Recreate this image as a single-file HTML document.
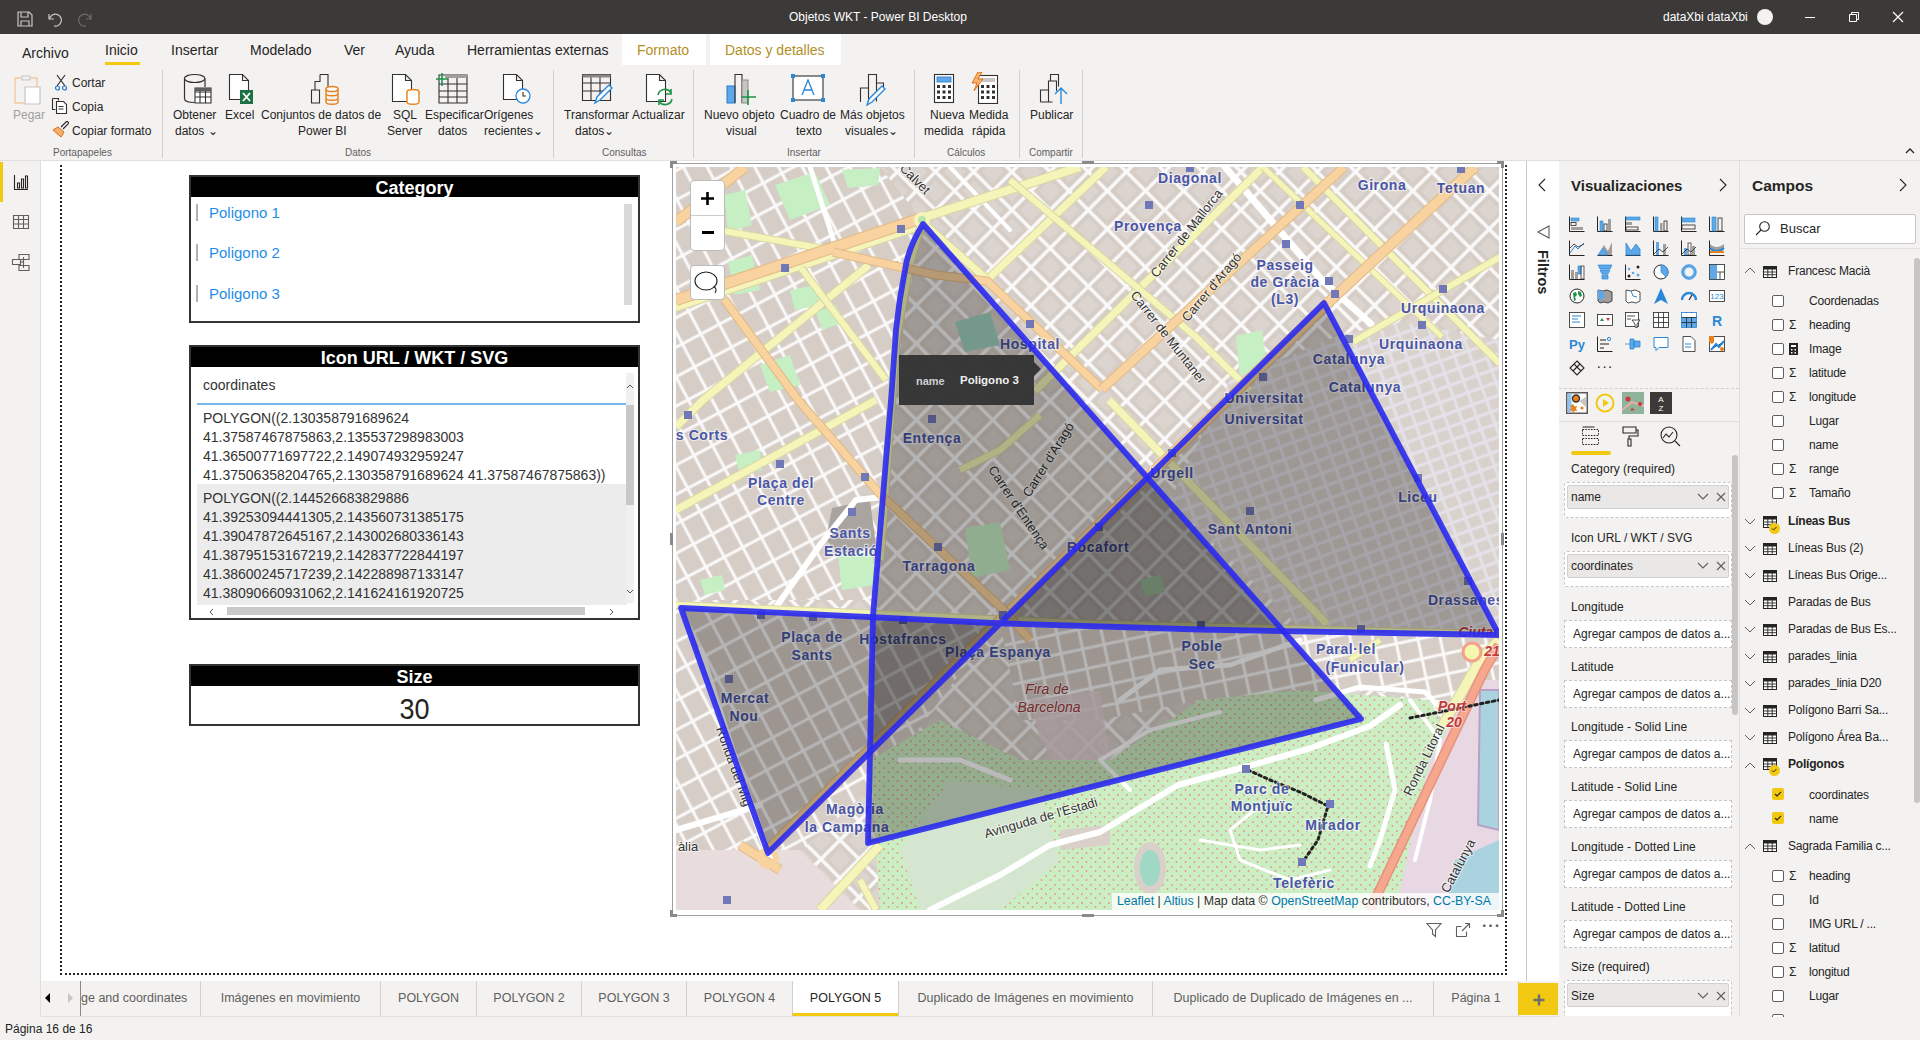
<!DOCTYPE html>
<html><head><meta charset="utf-8">
<style>
*{margin:0;padding:0;box-sizing:border-box}
html,body{width:1920px;height:1040px;overflow:hidden;background:#f3f2f1;font-family:"Liberation Sans",sans-serif;color:#252423}
.a{position:absolute}
.t{position:absolute;white-space:nowrap;line-height:1}
#title{left:0;top:0;width:1920px;height:34px;background:#3b3a39}
#ribbon{left:0;top:34px;width:1920px;height:127px;background:#f3f2f1;border-bottom:1px solid #e1dfdd}
.tab{font-size:14px;color:#252423;top:43px}
.rb{font-size:12px;color:#252423;text-align:center}
.grp{font-size:10px;color:#605e5c;top:148px}
.sep{position:absolute;top:70px;width:1px;height:88px;background:#d2d0ce}
#leftnav{left:0;top:161px;width:41px;height:855px;background:#f3f2f1;border-right:1px solid #e1dfdd}
#canvas{left:41px;top:161px;width:1485px;height:820px;background:#fff}
#filters{left:1526px;top:161px;width:33px;height:855px;background:#fff;border-left:1px solid #c8c6c4}
#viz{left:1559px;top:161px;width:181px;height:855px;background:#f3f2f1;border-right:1px solid #e1dfdd}
#fields{left:1740px;top:161px;width:180px;height:855px;background:#f3f2f1}
#tabs{left:41px;top:981px;width:1518px;height:36px;background:#f3f2f1;border-bottom:1px solid #e1dfdd}
#status{left:0;top:1017px;width:1920px;height:23px;background:#f3f2f1}
.pt{position:absolute;top:981px;height:35px;font-size:12.5px;color:#605e5c;line-height:35px;text-align:center;border-left:1px solid #d2d0ce}
.hdr{background:#000;color:#fff;font-weight:bold;text-align:center}
</style></head><body>

<!-- TITLE BAR -->
<div id="title" class="a">
  <svg class="a" style="left:16px;top:10px" width="18" height="18" viewBox="0 0 18 18"><path d="M2 2h11l3 3v11H2z M5 2v5h7V2 M5 16v-5h8v5" fill="none" stroke="#c8c6c4" stroke-width="1.2"/></svg>
  <svg class="a" style="left:46px;top:10px" width="18" height="18" viewBox="0 0 18 18"><path d="M3 4v5h5 M3.5 9A6 6 0 1 1 8 16" fill="none" stroke="#c8c6c4" stroke-width="1.2"/></svg>
  <svg class="a" style="left:76px;top:10px" width="18" height="18" viewBox="0 0 18 18"><path d="M15 4v5h-5 M14.5 9A6 6 0 1 0 10 16" fill="none" stroke="#6e6c6a" stroke-width="1.2"/></svg>
  <div class="t" style="left:789px;top:11px;font-size:12px;color:#fff">Objetos WKT - Power BI Desktop</div>
  <div class="t" style="left:1663px;top:11px;font-size:12px;color:#fff">dataXbi dataXbi</div>
  <div class="a" style="left:1757px;top:9px;width:16px;height:16px;border-radius:50%;background:#f3f2f1"></div>
  <div class="a" style="left:1805px;top:17px;width:10px;height:1px;background:#fff"></div>
  <svg class="a" style="left:1848px;top:11px" width="12" height="12" viewBox="0 0 12 12"><path d="M1.5 3.5h7v7h-7z M3.5 3.5v-2h7v7h-2" fill="none" stroke="#fff" stroke-width="1"/></svg>
  <svg class="a" style="left:1892px;top:11px" width="12" height="12" viewBox="0 0 12 12"><path d="M1 1l10 10M11 1L1 11" stroke="#fff" stroke-width="1.2"/></svg>
</div>

<!-- RIBBON -->
<div id="ribbon" class="a"></div>
<div class="a" style="left:622px;top:34px;width:84px;height:31px;background:#fff"></div>
<div class="a" style="left:710px;top:34px;width:131px;height:31px;background:#fff"></div>
<div class="t tab" style="left:22px;top:46px">Archivo</div>
<div class="t tab" style="left:105px">Inicio</div>
<div class="a" style="left:105px;top:62px;width:35px;height:3px;background:#f2c811"></div>
<div class="t tab" style="left:171px">Insertar</div>
<div class="t tab" style="left:250px">Modelado</div>
<div class="t tab" style="left:344px">Ver</div>
<div class="t tab" style="left:395px">Ayuda</div>
<div class="t tab" style="left:467px">Herramientas externas</div>
<div class="t tab" style="left:637px;color:#b38f1f">Formato</div>
<div class="t tab" style="left:725px;color:#b38f1f">Datos y detalles</div>


<!-- ribbon buttons -->
<svg class="a" style="left:12px;top:72px" width="34" height="34" viewBox="0 0 34 34"><path d="M3 6h6 M19 6h6v12 M3 6v25h9" fill="none" stroke="#f3c79a" stroke-width="1.3"/><path d="M10 4h8v4h-8z" fill="none" stroke="#c8c6c4" stroke-width="1.2"/><path d="M13 15h15v17H13z" fill="#fff" stroke="#c8c6c4" stroke-width="1.2"/></svg>
<div class="t rb" style="left:13px;top:109px;color:#a19f9d">Pegar</div>
<svg class="a" style="left:54px;top:74px" width="14" height="17" viewBox="0 0 14 17"><path d="M3 1l8 11M11 1L3 12" stroke="#323130" stroke-width="1.2"/><circle cx="3.5" cy="14" r="2" fill="none" stroke="#2b78c5" stroke-width="1.2"/><circle cx="10.5" cy="14" r="2" fill="none" stroke="#2b78c5" stroke-width="1.2"/></svg>
<div class="t rb" style="left:72px;top:77px">Cortar</div>
<svg class="a" style="left:51px;top:97px" width="18" height="17" viewBox="0 0 18 17"><path d="M1.5 1.5h6v2 M1.5 1.5v11h3" fill="none" stroke="#323130" stroke-width="1.1"/><path d="M5.5 4.5h7l3 3v9h-10z M7.5 9.5h5 M7.5 12h5" fill="#fff" stroke="#323130" stroke-width="1.1"/></svg>
<div class="t rb" style="left:72px;top:101px">Copia</div>
<svg class="a" style="left:52px;top:121px" width="17" height="17" viewBox="0 0 17 17"><path d="M1 9l8 7 3-5-6-5z" fill="#f6b26b" stroke="#d86a10" stroke-width="1"/><path d="M9 6l6-6 2 2-6 6" fill="none" stroke="#323130" stroke-width="1.2"/></svg>
<div class="t rb" style="left:72px;top:125px">Copiar formato</div>
<div class="t grp" style="left:53px">Portapapeles</div>
<div class="sep" style="left:162px"></div>

<svg class="a" style="left:183px;top:73px" width="30" height="33" viewBox="0 0 30 33"><path d="M1.5 5.5v20c0 3 4 4 10 4 M22 14V5.5" fill="none" stroke="#323130" stroke-width="1.2"/><ellipse cx="11.7" cy="5.5" rx="10.2" ry="4" fill="none" stroke="#323130" stroke-width="1.2"/><path d="M12 15h16v15H12z M12 19h16 M12 24h16 M17 15v15 M22.5 15v15" fill="#fff" stroke="#323130" stroke-width="1.1"/><rect x="12" y="15" width="16" height="3" fill="#605e5c"/></svg>
<div class="t rb" style="left:173px;top:109px">Obtener</div>
<div class="t rb" style="left:175px;top:125px">datos &#8964;</div>
<svg class="a" style="left:228px;top:73px" width="27" height="33" viewBox="0 0 27 33"><path d="M1.5 1.5h13l6 6v19h-19z M14.5 1.5v6h6" fill="#fff" stroke="#323130" stroke-width="1.1"/><rect x="12" y="17" width="13" height="14" fill="#1d7044"/><path d="M15 20l7 8M22 20l-7 8" stroke="#fff" stroke-width="1.8"/></svg>
<div class="t rb" style="left:225px;top:109px">Excel</div>
<svg class="a" style="left:310px;top:73px" width="30" height="33" viewBox="0 0 30 33"><path d="M10 1.5h8v12 M10 1.5v7h-5v8 M1.5 17h8v13h-8z" fill="none" stroke="#323130" stroke-width="1.1"/><ellipse cx="22" cy="16" rx="6" ry="2.5" fill="#fff" stroke="#e8801c" stroke-width="1.4"/><path d="M16 16v13c0 3 12 3 12 0V16 M16 20.5c0 3 12 3 12 0 M16 25c0 3 12 3 12 0" fill="none" stroke="#e8801c" stroke-width="1.4"/></svg>
<div class="t rb" style="left:261px;top:109px">Conjuntos de datos de</div>
<div class="t rb" style="left:298px;top:125px">Power BI</div>
<svg class="a" style="left:391px;top:73px" width="30" height="33" viewBox="0 0 30 33"><path d="M1.5 1.5h13l6 6v21h-19z M14.5 1.5v6h6" fill="#fff" stroke="#323130" stroke-width="1.1"/><ellipse cx="22" cy="19" rx="6" ry="2.5" fill="#fff" stroke="#e8801c" stroke-width="1.4"/><path d="M16 19v10c0 3 12 3 12 0V19" fill="#fff" stroke="#e8801c" stroke-width="1.4"/></svg>
<div class="t rb" style="left:393px;top:109px">SQL</div>
<div class="t rb" style="left:387px;top:125px">Server</div>
<svg class="a" style="left:435px;top:72px" width="34" height="33" viewBox="0 0 34 33"><path d="M4 3h28v28H4z M4 12h28 M4 19h28 M4 25h28 M13 3v28 M22 3v28" fill="none" stroke="#323130" stroke-width="1.1"/><rect x="10" y="3" width="22" height="3" fill="#a19f9d"/><path d="M7 1v13M1 7h12" stroke="#1d9449" stroke-width="1.6"/></svg>
<div class="t rb" style="left:425px;top:109px">Especificar</div>
<div class="t rb" style="left:438px;top:125px">datos</div>
<svg class="a" style="left:502px;top:73px" width="30" height="33" viewBox="0 0 30 33"><path d="M1.5 1.5h13l6 6v19h-19z M14.5 1.5v6h6" fill="#fff" stroke="#323130" stroke-width="1.1"/><circle cx="21" cy="23" r="7" fill="#fff" stroke="#2b88d8" stroke-width="1.3"/><path d="M21 19v4h3" fill="none" stroke="#323130" stroke-width="1.1"/></svg>
<div class="t rb" style="left:484px;top:109px">Orígenes</div>
<div class="t rb" style="left:484px;top:125px">recientes&#8964;</div>
<div class="t grp" style="left:345px">Datos</div>
<div class="sep" style="left:553px"></div>

<svg class="a" style="left:581px;top:73px" width="32" height="32" viewBox="0 0 32 32"><path d="M1.5 1.5h28v26h-28z M1.5 10h28 M1.5 18h28 M10 1.5v26 M19 1.5v26" fill="none" stroke="#323130" stroke-width="1.1"/><rect x="1.5" y="1.5" width="28" height="3" fill="#8a8886"/><path d="M14 30l2-6 12-12 3 3-12 12z" fill="#fff" stroke="#2b88d8" stroke-width="1.4"/></svg>
<div class="t rb" style="left:564px;top:109px">Transformar</div>
<div class="t rb" style="left:575px;top:125px">datos&#8964;</div>
<svg class="a" style="left:645px;top:73px" width="30" height="33" viewBox="0 0 30 33"><path d="M1.5 1.5h13l6 6v21h-19z M14.5 1.5v6h6" fill="#fff" stroke="#323130" stroke-width="1.1"/><path d="M13 22a7 7 0 0 1 13-2 M27 26a7 7 0 0 1-13 2" fill="none" stroke="#1d9449" stroke-width="1.6"/><path d="M26 16v5h-5 M14 32v-5h5" fill="none" stroke="#1d9449" stroke-width="1.6"/></svg>
<div class="t rb" style="left:632px;top:109px">Actualizar</div>
<div class="t grp" style="left:602px">Consultas</div>
<div class="sep" style="left:693px"></div>

<svg class="a" style="left:726px;top:73px" width="32" height="33" viewBox="0 0 32 33"><rect x="1" y="13" width="8" height="17" fill="#5ea8e8" stroke="#2b78c5" stroke-width="1"/><path d="M9 30V1.5h7v28.5" fill="none" stroke="#323130" stroke-width="1.1"/><rect x="16" y="7" width="6" height="23" fill="#c8c6c4" stroke="#8a8886" stroke-width="1"/><path d="M22 17v15M15 24h15" stroke="#1d9449" stroke-width="1.6"/></svg>
<div class="t rb" style="left:704px;top:109px">Nuevo objeto</div>
<div class="t rb" style="left:726px;top:125px">visual</div>
<svg class="a" style="left:791px;top:74px" width="34" height="28" viewBox="0 0 34 28"><rect x="2" y="2" width="30" height="24" fill="#fff" stroke="#323130" stroke-width="1.1"/><rect x="0" y="0" width="4" height="4" fill="#2b88d8"/><rect x="30" y="0" width="4" height="4" fill="#2b88d8"/><rect x="0" y="24" width="4" height="4" fill="#2b88d8"/><rect x="30" y="24" width="4" height="4" fill="#2b88d8"/><path d="M11 21l6-15 6 15M13 16h8" fill="none" stroke="#2b88d8" stroke-width="1.3"/></svg>
<div class="t rb" style="left:780px;top:109px">Cuadro de</div>
<div class="t rb" style="left:796px;top:125px">texto</div>
<svg class="a" style="left:859px;top:73px" width="32" height="33" viewBox="0 0 32 33"><path d="M1.5 29V15h8v14 M9.5 29V1.5h8v27 M17.5 10h7v6" fill="none" stroke="#323130" stroke-width="1.1"/><path d="M8 32l2-6 13-13 3 3-13 13z" fill="#fff" stroke="#2b88d8" stroke-width="1.4"/></svg>
<div class="t rb" style="left:840px;top:109px">Más objetos</div>
<div class="t rb" style="left:845px;top:125px">visuales&#8964;</div>
<div class="t grp" style="left:787px">Insertar</div>
<div class="sep" style="left:914px"></div>

<svg class="a" style="left:933px;top:73px" width="22" height="31" viewBox="0 0 22 31"><rect x="1.5" y="1.5" width="19" height="28" fill="#fff" stroke="#323130" stroke-width="1.1"/><rect x="4" y="4" width="14" height="5" fill="#5ea8e8" stroke="#2b78c5" stroke-width=".8"/><g fill="#323130"><rect x="4" y="12" width="3" height="3"/><rect x="9.5" y="12" width="3" height="3"/><rect x="15" y="12" width="3" height="3"/><rect x="4" y="17.5" width="3" height="3"/><rect x="9.5" y="17.5" width="3" height="3"/><rect x="15" y="17.5" width="3" height="3"/><rect x="4" y="23" width="3" height="3"/><rect x="9.5" y="23" width="3" height="3"/><rect x="15" y="23" width="3" height="3"/></g></svg>
<div class="t rb" style="left:930px;top:109px">Nueva</div>
<div class="t rb" style="left:924px;top:125px">medida</div>
<svg class="a" style="left:971px;top:72px" width="28" height="32" viewBox="0 0 28 32"><rect x="7.5" y="3.5" width="19" height="28" fill="#fff" stroke="#323130" stroke-width="1.1"/><rect x="10" y="6" width="14" height="4" fill="#c8c6c4"/><g fill="#323130"><rect x="10" y="13" width="3" height="3"/><rect x="15.5" y="13" width="3" height="3"/><rect x="21" y="13" width="3" height="3"/><rect x="10" y="18.5" width="3" height="3"/><rect x="15.5" y="18.5" width="3" height="3"/><rect x="21" y="18.5" width="3" height="3"/><rect x="10" y="24" width="3" height="3"/><rect x="15.5" y="24" width="3" height="3"/><rect x="21" y="24" width="3" height="3"/></g><path d="M7 0L1 11h5l-3 8 9-12H7l4-7z" fill="#f6b26b" stroke="#d86a10" stroke-width=".9"/></svg>
<div class="t rb" style="left:969px;top:109px">Medida</div>
<div class="t rb" style="left:972px;top:125px">rápida</div>
<div class="t grp" style="left:947px">Cálculos</div>
<div class="sep" style="left:1019px"></div>

<svg class="a" style="left:1039px;top:73px" width="30" height="32" viewBox="0 0 30 32"><path d="M1.5 29V17h8v12 M9.5 17V8h8v10 M1.5 29h12 M11.5 8V1.5h8v12" fill="none" stroke="#323130" stroke-width="1.1"/><path d="M22 31V15 M16 21l6-6 6 6" fill="none" stroke="#2b88d8" stroke-width="1.4"/></svg>
<div class="t rb" style="left:1030px;top:109px">Publicar</div>
<div class="t grp" style="left:1029px">Compartir</div>
<div class="sep" style="left:1082px"></div>
<svg class="a" style="left:1905px;top:147px" width="10" height="7" viewBox="0 0 10 7"><path d="M1 6l4-4 4 4" fill="none" stroke="#252423" stroke-width="1.3"/></svg>


<!-- LEFT NAV -->
<div id="leftnav" class="a">
  <div class="a" style="left:0;top:1px;width:3px;height:40px;background:#f2c811"></div>
  <svg class="a" style="left:13px;top:14px" width="16" height="15" viewBox="0 0 16 15"><path d="M1.5 0v14.5H15 M4.5 8h2v5h-2z M8.5 4h2v9h-2z M12.5 1h2v12h-2z" fill="none" stroke="#252423" stroke-width="1.1"/></svg>
  <svg class="a" style="left:12px;top:53px" width="18" height="16" viewBox="0 0 18 16"><path d="M1.5 1.5h15v13h-15z M1.5 5.5h15 M1.5 10h15 M6.5 1.5v13 M11.5 1.5v13" fill="none" stroke="#605e5c" stroke-width="1.1"/></svg>
  <svg class="a" style="left:11px;top:92px" width="19" height="19" viewBox="0 0 19 19"><path d="M8 1.5h10v5H8z M1.5 6.5h8v5h-8z M8 12.5h10v5H8z M9.5 9h3 M12.5 4v11" fill="none" stroke="#605e5c" stroke-width="1.1"/></svg>
</div>

<!-- CANVAS -->
<div id="canvas" class="a"></div>
<!-- dotted page border -->
<div class="a" style="left:60px;top:165px;width:1447px;height:810px;border-left:2px dotted #252423;border-right:2px dotted #252423;border-bottom:2px dotted #252423"></div>

<!-- Category slicer -->
<div class="a" style="left:189px;top:175px;width:451px;height:148px;border:2px solid #333;background:#fff"></div>
<div class="a hdr" style="left:191px;top:177px;width:447px;height:20px"></div>
<div class="t" style="left:191px;top:179px;width:447px;text-align:center;font-size:18px;font-weight:bold;color:#fff">Category</div>
<div class="a" style="left:196px;top:204px;width:2px;height:17px;background:#b3b0ad"></div>
<div class="a" style="left:196px;top:244px;width:2px;height:17px;background:#b3b0ad"></div>
<div class="a" style="left:196px;top:285px;width:2px;height:17px;background:#b3b0ad"></div>
<div class="t" style="left:209px;top:205px;font-size:15px;color:#1e8de8">Poligono 1</div>
<div class="t" style="left:209px;top:245px;font-size:15px;color:#1e8de8">Poligono 2</div>
<div class="t" style="left:209px;top:286px;font-size:15px;color:#1e8de8">Poligono 3</div>
<div class="a" style="left:624px;top:204px;width:8px;height:101px;background:#d9d9d9"></div>

<!-- Icon URL table -->
<div class="a" style="left:189px;top:345px;width:451px;height:275px;border:2px solid #333;background:#fff;overflow:hidden">
  <div class="a hdr" style="left:0;top:0;width:447px;height:20px"></div>
  <div class="t" style="left:0;top:2px;width:447px;text-align:center;font-size:18px;font-weight:bold;color:#fff">Icon URL / WKT / SVG</div>
  <div class="t" style="left:12px;top:31px;font-size:14px;color:#333">coordinates</div>
  <div class="a" style="left:6px;top:56px;width:430px;height:2px;background:#7ab8ee"></div>
  <div class="a" style="left:6px;top:58px;width:430px;height:79px;background:#fff"></div>
  <div class="a" style="left:12px;top:62px;font-size:14px;line-height:19px;color:#333;white-space:nowrap">POLYGON((2.130358791689624<br>41.37587467875863,2.135537298983003<br>41.36500771697722,2.149074932959247<br>41.37506358204765,2.130358791689624 41.37587467875863))</div>
  <div class="a" style="left:6px;top:137px;width:430px;height:122px;background:#ececec"></div>
  <div class="a" style="left:12px;top:142px;font-size:14px;line-height:19px;color:#333;white-space:nowrap;height:118px;overflow:hidden">POLYGON((2.144526683829886<br>41.39253094441305,2.143560731385175<br>41.39047872645167,2.143002680336143<br>41.38795153167219,2.142837722844197<br>41.38600245717239,2.142288987133147<br>41.38090660931062,2.141624161920725<br>41.37795585416683,2.141624161920725</div>
  <div class="a" style="left:435px;top:26px;width:8px;height:230px;background:#f0f0f0"></div>
  <div class="a" style="left:435px;top:58px;width:8px;height:100px;background:#c8c8c8"></div>
  <svg class="a" style="left:435px;top:36px" width="8" height="6" viewBox="0 0 8 6"><path d="M1 5l3-3 3 3" fill="none" stroke="#555" stroke-width="1"/></svg>
  <svg class="a" style="left:435px;top:242px" width="8" height="6" viewBox="0 0 8 6"><path d="M1 1l3 3 3-3" fill="none" stroke="#555" stroke-width="1"/></svg>
  <div class="a" style="left:6px;top:258px;width:430px;height:12px;background:#fff"></div>
  <div class="a" style="left:36px;top:260px;width:358px;height:8px;background:#c8c8c8"></div>
  <svg class="a" style="left:17px;top:261px" width="6" height="8" viewBox="0 0 6 8"><path d="M5 1L2 4l3 3" fill="none" stroke="#555" stroke-width="1"/></svg>
  <svg class="a" style="left:418px;top:261px" width="6" height="8" viewBox="0 0 6 8"><path d="M1 1l3 3-3 3" fill="none" stroke="#555" stroke-width="1"/></svg>
</div>

<!-- Size card -->
<div class="a" style="left:189px;top:664px;width:451px;height:62px;border:2px solid #333;background:#fff"></div>
<div class="a hdr" style="left:191px;top:666px;width:447px;height:20px"></div>
<div class="t" style="left:191px;top:668px;width:447px;text-align:center;font-size:18px;font-weight:bold;color:#fff">Size</div>
<div class="t" style="left:191px;top:694px;width:447px;text-align:center;font-size:30px;color:#252423;transform:scaleX(0.9)">30</div>

<!--MAPSTART--><svg class="a" style="left:676px;top:167px" width="823" height="743" viewBox="676 167 823 743">
<defs>
<pattern id="eix" width="27" height="27" patternUnits="userSpaceOnUse" patternTransform="rotate(45)"><rect width="27" height="27" fill="#fbfafa"/><rect x="1.7" y="1.7" width="23.6" height="23.6" fill="#d6cdc6"/><rect x="6" y="6" width="15" height="15" fill="#dcd4ce"/></pattern>
<pattern id="sants" width="21" height="26" patternUnits="userSpaceOnUse" patternTransform="rotate(-28)"><rect width="21" height="26" fill="#fbfafa"/><rect x="1.5" y="1.5" width="18" height="23" fill="#d6cdc6"/></pattern>
<pattern id="sec" width="22" height="20" patternUnits="userSpaceOnUse" patternTransform="rotate(-12)"><rect width="22" height="20" fill="#fbfafa"/><rect x="1.5" y="1.5" width="19" height="17" fill="#d6cdc6"/></pattern>
<pattern id="raval" width="15" height="13" patternUnits="userSpaceOnUse" patternTransform="rotate(-20)"><rect width="15" height="13" fill="#e4e1e8"/><rect x="1.6" y="1.6" width="11.8" height="9.8" fill="#d9d1cb"/></pattern>
<pattern id="park" width="9" height="9" patternUnits="userSpaceOnUse"><rect width="9" height="9" fill="#cbeec5"/><circle cx="2" cy="3" r="0.9" fill="#e59a80"/><circle cx="6.5" cy="7" r="0.9" fill="#e59a80"/></pattern>
<clipPath id="mclip"><rect x="676" y="167" width="823" height="743"/></clipPath>
</defs>
<g clip-path="url(#mclip)">
<rect x="676" y="167" width="823" height="743" fill="url(#eix)"/>
<path d="M676,167 L880,167 L922,220 L888,420 L876,600 L676,600 Z" fill="url(#sants)"/>
<g fill="#c6efc4"><path d="M724,195 L745,190 L752,225 L728,232 Z"/><path d="M775,185 L815,172 L830,205 L790,220 Z"/><path d="M842,170 L880,168 L878,185 L848,188 Z"/><path d="M728,262 L752,255 L760,290 L735,295 Z"/><path d="M790,290 L815,285 L820,305 L795,310 Z"/><path d="M760,365 L790,355 L800,385 L770,392 Z"/><path d="M816,312 L836,305 L845,322 L822,330 Z"/><path d="M700,580 L722,575 L725,590 L705,595 Z"/><path d="M735,455 L760,450 L762,470 L740,475 Z"/></g>
<path d="M676,600 L1000,620 L880,780 L780,870 L676,870 Z" fill="url(#sants)"/>
<path d="M676,850 L800,850 L860,910 L676,910 Z" fill="#e8dcdc"/>
<g fill="#c6efc4"><path d="M965,528 L1000,522 L1010,570 L972,578 Z"/><path d="M838,556 L872,550 L876,585 L842,590 Z"/><path d="M1236,336 L1262,330 L1268,372 L1240,377 Z"/><path d="M975,330 L990,325 L995,338 L980,342 Z"/><path d="M1280,560 L1300,555 L1305,575 L1285,580 Z"/><path d="M1140,580 L1160,575 L1165,592 L1145,596 Z"/></g>
<path d="M832,508 L870,500 L876,546 L840,554 L826,540 Z" fill="#aaa4a0"/>
<path d="M955,322 L990,312 L1000,345 L965,352 Z" fill="#9fd2c0"/>
<path d="M1000,622 L1100,624 L1330,630 L1370,690 L1300,700 L1200,700 L1100,720 L1020,720 Z" fill="url(#sec)"/>
<path d="M1330,630 L1499,634 L1499,700 L1420,700 L1370,690 Z" fill="url(#sec)"/>
<path d="M1230,380 L1340,335 L1400,322 L1499,340 L1499,630 L1300,628 L1170,500 Z" fill="url(#raval)"/>
<path d="M1030,700 L1100,690 L1110,760 L1060,770 L1040,740 Z" fill="#e6d2d4" fill-opacity="0.8"/>
<path d="M870,760 L940,720 L1020,760 L1110,760 L1200,700 L1300,690 L1430,700 L1460,760 L1400,910 L880,910 Z" fill="url(#park)"/>
<ellipse cx="1150" cy="868" rx="16" ry="26" fill="#d9d0c9"/><ellipse cx="1150" cy="868" rx="10" ry="18" fill="#9fd8c4"/><path d="M1060,830 L1110,825 L1110,845 L1060,850 Z" fill="#d9d0c9"/>
<path d="M950,780 L1040,790 L1060,860 L1000,910 L920,910 L900,850 Z" fill="#d4e6cf"/>
<path d="M1430,760 L1475,680 L1499,680 L1499,910 L1395,910 Z" fill="#e8d8e4"/>
<path d="M1480,690 L1499,690 L1499,830 L1478,825 Z" fill="#aad3df" stroke="#b7a0c8" stroke-width="2"/>
<path d="M1445,910 L1455,860 L1499,840 L1499,910 Z" fill="#aad3df"/>
<path d="M810,167 L835,245" stroke="#fff" stroke-width="5" fill="none" stroke-linejoin="round" stroke-linecap="round"/>
<path d="M776,607 L820,545 L856,500 L883,497" stroke="#fff" stroke-width="6" fill="none" stroke-linejoin="round" stroke-linecap="round"/>
<path d="M700,650 L735,760 L770,860" stroke="#fff" stroke-width="7" fill="none" stroke-linejoin="round" stroke-linecap="round"/>
<path d="M676,830 L760,805" stroke="#fff" stroke-width="6" fill="none" stroke-linejoin="round" stroke-linecap="round"/>
<path d="M930,910 L1000,875 L1050,845 L1100,832 L1178,785 L1245,767 L1308,749 L1370,726 L1400,705" stroke="#fff" stroke-width="6" fill="none" stroke-linejoin="round" stroke-linecap="round"/>
<path d="M1386,744 L1395,790 L1380,840 L1370,866" stroke="#fff" stroke-width="5" fill="none" stroke-linejoin="round" stroke-linecap="round"/>
<path d="M1316,700 L1360,687 L1425,692 L1437,705" stroke="#fff" stroke-width="5" fill="none" stroke-linejoin="round" stroke-linecap="round"/>
<path d="M1256,809 L1230,830 L1240,860 L1290,880 L1330,870" stroke="#fff" stroke-width="3" fill="none" stroke-linejoin="round" stroke-linecap="round"/>
<path d="M1200,840 L1260,850 L1300,845" stroke="#fff" stroke-width="3" fill="none" stroke-linejoin="round" stroke-linecap="round"/>
<path d="M1130,790 L1100,760 L1150,730 L1220,712" stroke="#fff" stroke-width="4" fill="none" stroke-linejoin="round" stroke-linecap="round"/>
<path d="M1410,700 L1440,740 L1430,800 L1415,860" stroke="#fff" stroke-width="4" fill="none" stroke-linejoin="round" stroke-linecap="round"/>
<path d="M1120,700 L1160,670 L1230,665 L1300,640" stroke="#fff" stroke-width="5" fill="none" stroke-linejoin="round" stroke-linecap="round"/>
<path d="M900,760 L960,760 L1010,780" stroke="#fff" stroke-width="5" fill="none" stroke-linejoin="round" stroke-linecap="round"/>
<path d="M1225,167 L1321,279 L1371,324" stroke="#fff" stroke-width="7" fill="none" stroke-linejoin="round" stroke-linecap="round"/>
<path d="M950,167 L1010,230" stroke="#fff" stroke-width="4" fill="none" stroke-linejoin="round" stroke-linecap="round"/>
<path d="M676,308 L922,226" stroke="#d9d8a2" stroke-width="8" fill="none" stroke-linejoin="round"/>
<path d="M676,308 L922,226" stroke="#f5f5ba" stroke-width="6" fill="none" stroke-linejoin="round"/>
<path d="M922,218 L1080,167" stroke="#d9d8a2" stroke-width="10" fill="none" stroke-linejoin="round"/>
<path d="M922,218 L1080,167" stroke="#f5f5ba" stroke-width="8" fill="none" stroke-linejoin="round"/>
<path d="M922,222 L910,262 L896,340 L888,450 L880,560" stroke="#d9d8a2" stroke-width="9" fill="none" stroke-linejoin="round"/>
<path d="M922,222 L910,262 L896,340 L888,450 L880,560" stroke="#f5f5ba" stroke-width="7" fill="none" stroke-linejoin="round"/>
<path d="M922,222 L990,282" stroke="#d9d8a2" stroke-width="9" fill="none" stroke-linejoin="round"/>
<path d="M922,222 L990,282" stroke="#f5f5ba" stroke-width="7" fill="none" stroke-linejoin="round"/>
<path d="M990,277 L1106,167" stroke="#d9d8a2" stroke-width="9" fill="none" stroke-linejoin="round"/>
<path d="M990,277 L1106,167" stroke="#f5f5ba" stroke-width="7" fill="none" stroke-linejoin="round"/>
<path d="M1035,391 L1263,167" stroke="#d9d8a2" stroke-width="9" fill="none" stroke-linejoin="round"/>
<path d="M1035,391 L1263,167" stroke="#f5f5ba" stroke-width="7" fill="none" stroke-linejoin="round"/>
<path d="M676,427 L703,400 L869,265" stroke="#d9d8a2" stroke-width="9" fill="none" stroke-linejoin="round"/>
<path d="M676,427 L703,400 L869,265" stroke="#f5f5ba" stroke-width="7" fill="none" stroke-linejoin="round"/>
<path d="M676,510 L876,400" stroke="#d9d8a2" stroke-width="9" fill="none" stroke-linejoin="round"/>
<path d="M676,510 L876,400" stroke="#f5f5ba" stroke-width="7" fill="none" stroke-linejoin="round"/>
<path d="M1010,180 L1196,337 L1250,390" stroke="#d9d8a2" stroke-width="8" fill="none" stroke-linejoin="round"/>
<path d="M1010,180 L1196,337 L1250,390" stroke="#f5f5ba" stroke-width="6" fill="none" stroke-linejoin="round"/>
<path d="M1303,167 L1500,364" stroke="#d9d8a2" stroke-width="8" fill="none" stroke-linejoin="round"/>
<path d="M1303,167 L1500,364" stroke="#f5f5ba" stroke-width="6" fill="none" stroke-linejoin="round"/>
<path d="M1263,167 L1442,337" stroke="#d9d8a2" stroke-width="7" fill="none" stroke-linejoin="round"/>
<path d="M1263,167 L1442,337" stroke="#f5f5ba" stroke-width="5" fill="none" stroke-linejoin="round"/>
<path d="M1353,342 L1500,257" stroke="#d9d8a2" stroke-width="8" fill="none" stroke-linejoin="round"/>
<path d="M1353,342 L1500,257" stroke="#f5f5ba" stroke-width="6" fill="none" stroke-linejoin="round"/>
<path d="M1109,400 L1327,624" stroke="#d9d8a2" stroke-width="9" fill="none" stroke-linejoin="round"/>
<path d="M1109,400 L1327,624" stroke="#f5f5ba" stroke-width="7" fill="none" stroke-linejoin="round"/>
<path d="M1040,415 L1000,450 L960,470" stroke="#d9d8a2" stroke-width="8" fill="none" stroke-linejoin="round"/>
<path d="M1040,415 L1000,450 L960,470" stroke="#f5f5ba" stroke-width="6" fill="none" stroke-linejoin="round"/>
<path d="M676,605 L1100,624 L1499,634" stroke="#d9d8a2" stroke-width="8" fill="none" stroke-linejoin="round"/>
<path d="M676,605 L1100,624 L1499,634" stroke="#f5f5ba" stroke-width="6" fill="none" stroke-linejoin="round"/>
<path d="M1350,660 L1380,640" stroke="#d9d8a2" stroke-width="7" fill="none" stroke-linejoin="round"/>
<path d="M1350,660 L1380,640" stroke="#f5f5ba" stroke-width="5" fill="none" stroke-linejoin="round"/>
<path d="M1440,730 L1480,660 L1499,640" stroke="#d9d8a2" stroke-width="11" fill="none" stroke-linejoin="round"/>
<path d="M1440,730 L1480,660 L1499,640" stroke="#f5f5ba" stroke-width="9" fill="none" stroke-linejoin="round"/>
<path d="M820,910 L880,845" stroke="#d9d8a2" stroke-width="10" fill="none" stroke-linejoin="round"/>
<path d="M820,910 L880,845" stroke="#f5f5ba" stroke-width="8" fill="none" stroke-linejoin="round"/>
<path d="M876,910 L860,880" stroke="#d9d8a2" stroke-width="8" fill="none" stroke-linejoin="round"/>
<path d="M876,910 L860,880" stroke="#f5f5ba" stroke-width="6" fill="none" stroke-linejoin="round"/>
<path d="M724,231 L819,248 L850,252" stroke="#d9d8a2" stroke-width="8" fill="none" stroke-linejoin="round"/>
<path d="M724,231 L819,248 L850,252" stroke="#f5f5ba" stroke-width="6" fill="none" stroke-linejoin="round"/>
<path d="M801,268 L886,380" stroke="#d9d8a2" stroke-width="8" fill="none" stroke-linejoin="round"/>
<path d="M801,268 L886,380" stroke="#f5f5ba" stroke-width="6" fill="none" stroke-linejoin="round"/>
<path d="M676,300 L922,218" stroke="#e2b984" stroke-width="12" fill="none" stroke-linejoin="round"/>
<path d="M676,300 L922,218" stroke="#f8d3a0" stroke-width="10" fill="none" stroke-linejoin="round"/>
<path d="M833,252 L936,275 L987,281 L1102,389" stroke="#e2b984" stroke-width="9" fill="none" stroke-linejoin="round"/>
<path d="M833,252 L936,275 L987,281 L1102,389" stroke="#f8d3a0" stroke-width="7" fill="none" stroke-linejoin="round"/>
<path d="M1102,389 L1344,167" stroke="#e2b984" stroke-width="10" fill="none" stroke-linejoin="round"/>
<path d="M1102,389 L1344,167" stroke="#f8d3a0" stroke-width="8" fill="none" stroke-linejoin="round"/>
<path d="M1475,167 L1332,299 L1000,620 L768,850" stroke="#e2b984" stroke-width="11" fill="none" stroke-linejoin="round"/>
<path d="M1475,167 L1332,299 L1000,620 L768,850" stroke="#f8d3a0" stroke-width="9" fill="none" stroke-linejoin="round"/>
<path d="M724,299 L798,400 L880,494 L1006,612 L1030,640" stroke="#e2b984" stroke-width="9" fill="none" stroke-linejoin="round"/>
<path d="M724,299 L798,400 L880,494 L1006,612 L1030,640" stroke="#f8d3a0" stroke-width="7" fill="none" stroke-linejoin="round"/>
<path d="M676,222 L745,167" stroke="#e2b984" stroke-width="11" fill="none" stroke-linejoin="round"/>
<path d="M676,222 L745,167" stroke="#f8d3a0" stroke-width="9" fill="none" stroke-linejoin="round"/>
<path d="M740,845 L780,870" stroke="#e2b984" stroke-width="10" fill="none" stroke-linejoin="round"/>
<path d="M740,845 L780,870" stroke="#f8d3a0" stroke-width="8" fill="none" stroke-linejoin="round"/>
<path d="M1370,910 L1484,671 L1499,645" stroke="#e8907a" stroke-width="10" fill="none"/>
<path d="M1370,910 L1484,671 L1499,645" stroke="#f6a88f" stroke-width="7" fill="none"/>
<circle cx="1472" cy="652" r="9" fill="#f7f7b0" stroke="#f4a08a" stroke-width="3"/>
<circle cx="922" cy="220" r="6" fill="#b8e6a8" stroke="#f5f5ba" stroke-width="4"/>
<circle cx="768" cy="858" r="8" fill="none" stroke="#f8d3a0" stroke-width="6"/>
<path d="M1248,770 L1270,780 L1300,792 L1328,806 L1318,840 L1304,860" stroke="#222" stroke-width="3" fill="none" stroke-dasharray="2.5 3.5" stroke-linecap="round"/>
<path d="M1410,718 L1440,712 L1470,706 L1499,700" stroke="#222" stroke-width="3" fill="none" stroke-dasharray="2.5 3.5" stroke-linecap="round"/>
<rect x="897" y="225" width="8" height="8" fill="#7178b8"/>
<rect x="781" y="264" width="8" height="8" fill="#7178b8"/>
<rect x="1145" y="201" width="8" height="8" fill="#7178b8"/>
<rect x="1026" y="320" width="8" height="8" fill="#7178b8"/>
<rect x="1296" y="201" width="8" height="8" fill="#7178b8"/>
<rect x="1282" y="240" width="8" height="8" fill="#7178b8"/>
<rect x="1325" y="277" width="8" height="8" fill="#7178b8"/>
<rect x="1331" y="290" width="8" height="8" fill="#7178b8"/>
<rect x="1439" y="285" width="8" height="8" fill="#7178b8"/>
<rect x="1418" y="321" width="8" height="8" fill="#7178b8"/>
<rect x="1345" y="335" width="8" height="8" fill="#7178b8"/>
<rect x="1259" y="373" width="8" height="8" fill="#7178b8"/>
<rect x="1457" y="165" width="8" height="8" fill="#7178b8"/>
<rect x="684" y="411" width="8" height="8" fill="#7178b8"/>
<rect x="776" y="460" width="8" height="8" fill="#7178b8"/>
<rect x="861" y="473" width="8" height="8" fill="#7178b8"/>
<rect x="848" y="508" width="8" height="8" fill="#7178b8"/>
<rect x="928" y="415" width="8" height="8" fill="#7178b8"/>
<rect x="934" y="543" width="8" height="8" fill="#7178b8"/>
<rect x="757" y="611" width="8" height="8" fill="#7178b8"/>
<rect x="809" y="613" width="8" height="8" fill="#7178b8"/>
<rect x="899" y="616" width="8" height="8" fill="#7178b8"/>
<rect x="999" y="611" width="8" height="8" fill="#7178b8"/>
<rect x="1168" y="449" width="8" height="8" fill="#7178b8"/>
<rect x="1095" y="523" width="8" height="8" fill="#7178b8"/>
<rect x="1246" y="507" width="8" height="8" fill="#7178b8"/>
<rect x="1414" y="474" width="8" height="8" fill="#7178b8"/>
<rect x="1464" y="577" width="8" height="8" fill="#7178b8"/>
<rect x="1197" y="621" width="8" height="8" fill="#7178b8"/>
<rect x="1357" y="625" width="8" height="8" fill="#7178b8"/>
<rect x="725" y="675" width="8" height="8" fill="#7178b8"/>
<rect x="723" y="896" width="8" height="8" fill="#7178b8"/>
<rect x="1242" y="765" width="8" height="8" fill="#7178b8"/>
<rect x="1326" y="800" width="8" height="8" fill="#7178b8"/>
<rect x="1298" y="858" width="8" height="8" fill="#7178b8"/>
<rect x="1186" y="164" width="8" height="8" fill="#7178b8"/>
<g font-family="Liberation Sans" font-weight="bold" font-size="14" letter-spacing="0.6" fill="#4a56a6" stroke="#ffffff" stroke-opacity="0.55" stroke-width="2.5" paint-order="stroke" text-anchor="middle">
<text x="1190" y="183">Diagonal</text>
<text x="1148" y="231">Provença</text>
<text x="1382" y="190">Girona</text>
<text x="1461" y="193">Tetuan</text>
<text x="1285" y="270">Passeig</text>
<text x="1285" y="287">de Gràcia</text>
<text x="1285" y="304">(L3)</text>
<text x="1443" y="313">Urquinaona</text>
<text x="1421" y="349">Urquinaona</text>
<text x="1349" y="364">Catalunya</text>
<text x="1365" y="392">Catalunya</text>
<text x="1030" y="349">Hospital</text>
<text x="932" y="443">Entença</text>
<text x="1264" y="403">Universitat</text>
<text x="1264" y="424">Universitat</text>
<text x="1172" y="478">Urgell</text>
<text x="1250" y="534">Sant Antoni</text>
<text x="1098" y="552">Rocafort</text>
<text x="1418" y="502">Liceu</text>
<text x="1466" y="605">Drassanes</text>
<text x="702" y="440">s Corts</text>
<text x="781" y="488">Plaça del</text>
<text x="781" y="505">Centre</text>
<text x="850" y="538">Sants</text>
<text x="851" y="556">Estació</text>
<text x="939" y="571">Tarragona</text>
<text x="812" y="642">Plaça de</text>
<text x="812" y="660">Sants</text>
<text x="903" y="644">Hostafrancs</text>
<text x="998" y="657">Plaça Espanya</text>
<text x="1202" y="651">Poble</text>
<text x="1202" y="669">Sec</text>
<text x="1346" y="654">Paral·lel</text>
<text x="1365" y="672">(Funicular)</text>
<text x="745" y="703">Mercat</text>
<text x="744" y="721">Nou</text>
<text x="855" y="814">Magòria</text>
<text x="847" y="832">la Campana</text>
<text x="1262" y="794">Parc de</text>
<text x="1262" y="811">Montjuïc</text>
<text x="1333" y="830">Mirador</text>
<text x="1304" y="888">Telefèric</text>
</g>
<g font-family="Liberation Sans" font-style="italic" font-size="14" fill="#a03a3a" stroke="#fff" stroke-opacity="0.5" stroke-width="2" paint-order="stroke" text-anchor="middle">
<text x="1047" y="694">Fira de</text><text x="1049" y="712">Barcelona</text>
</g>
<g font-family="Liberation Sans" font-style="italic" font-weight="bold" font-size="14" fill="#c43a3a" stroke="#fff" stroke-opacity="0.5" stroke-width="2" paint-order="stroke" text-anchor="middle">
<text x="1478" y="637">Ciutat</text><text x="1492" y="656">21</text><text x="1452" y="711">Port</text><text x="1454" y="727">20</text>
</g>
<g font-family="Liberation Sans" font-size="13" fill="#333" stroke="#fff" stroke-opacity="0.6" stroke-width="2" paint-order="stroke" text-anchor="middle">
<text transform="translate(1190,236) rotate(-52)">Carrer de Mallorca</text>
<text transform="translate(1215,290) rotate(-50)">Carrer d'Aragó</text>
<text transform="translate(1165,340) rotate(52)">Carrer de Muntaner</text>
<text transform="translate(1052,462) rotate(-58)">Carrer d'Aragó</text>
<text transform="translate(1015,510) rotate(56)">Carrer d'Entença</text>
<text transform="translate(730,768) rotate(70)">Ronda del Mig</text>
<text transform="translate(1042,822) rotate(-16)">Avinguda de l'Estadi</text>
<text transform="translate(1428,762) rotate(-64)">Ronda Litoral</text>
<text transform="translate(1462,868) rotate(-62)">Catalunya</text>
<text transform="translate(912,182) rotate(45)">Calvet</text>
<text x="688" y="851">àlia</text>
</g>
<!-- polygons -->
<path d="M923,224 C913,240 907,256 905,270 C901,290 898,310 896,330 L891,400 L873,616 L868,843 L1361,719 Z" fill="#000" fill-opacity="0.27"/>
<path d="M1324,303 L1499,635 L1200,629.5 L1003,623.5 L681,608 L768,853 Z" fill="#000" fill-opacity="0.27"/>
<path d="M923,224 C913,240 907,256 905,270 C901,290 898,310 896,330 L891,400 L873,616 L868,843 L1361,719 Z" fill="none" stroke="#2a2af0" stroke-opacity="0.9" stroke-width="5.8" stroke-linejoin="round"/>
<path d="M1324,303 L1499,635 L1200,629.5 L1003,623.5 L681,608 L768,853 Z" fill="none" stroke="#2a2af0" stroke-opacity="0.9" stroke-width="5.8" stroke-linejoin="round"/>
</g>
</svg>
<!-- zoom controls -->
<div class="a" style="left:690px;top:180px;width:35px;height:71px;background:#fff;border:1.5px solid #bbb;border-radius:4px"></div>
<div class="a" style="left:691px;top:215px;width:33px;height:1px;background:#ccc"></div>
<svg class="a" style="left:700px;top:191px" width="15" height="15" viewBox="0 0 15 15"><path d="M7.5 1v13M1 7.5h13" stroke="#000" stroke-width="2.6"/></svg>
<div class="a" style="left:702px;top:231px;width:12px;height:2.5px;background:#000"></div>
<div class="a" style="left:690px;top:265px;width:35px;height:35px;background:#fff;border:1.5px solid #bbb;border-radius:4px"></div>
<svg class="a" style="left:692px;top:268px" width="32" height="30" viewBox="0 0 32 30"><ellipse cx="14" cy="13" rx="11" ry="9" fill="none" stroke="#222" stroke-width="1.1"/><path d="M21 19c3 0 4 3 2 6" fill="none" stroke="#222" stroke-width="1.1"/></svg>
<!-- tooltip -->
<div class="a" style="left:899px;top:355px;width:135px;height:50px;background:rgba(51,51,51,0.96)"></div>
<svg class="a" style="left:1034px;top:362px" width="7" height="14" viewBox="0 0 7 14"><path d="M0 0L7 7L0 14Z" fill="rgba(51,51,51,0.96)"/></svg>
<div class="t" style="left:916px;top:376px;font-size:11px;font-weight:bold;color:#d0d0d0">name</div>
<div class="t" style="left:960px;top:375px;font-size:11.5px;font-weight:bold;color:#f0f0f0">Poligono 3</div>
<!-- attribution -->
<div class="a" style="left:1112px;top:893px;width:387px;height:17px;background:rgba(255,255,255,0.8)"></div>
<div class="t" style="left:1117px;top:895px;font-size:12.35px;color:#333"><span style="color:#0078a8">Leaflet</span> | <span style="color:#0078a8">Altius</span> | Map data © <span style="color:#0078a8">OpenStreetMap</span> contributors, <span style="color:#0078a8">CC-BY-SA</span></div>
<!-- visual frame -->
<div class="a" style="left:672px;top:163px;width:831px;height:753px;border:1px solid #a0a0a0"></div>
<div class="a" style="left:670px;top:161px;width:7px;height:3px;background:#8a8a8a"></div>
<div class="a" style="left:670px;top:161px;width:3px;height:7px;background:#8a8a8a"></div>
<div class="a" style="left:1497px;top:161px;width:7px;height:3px;background:#8a8a8a"></div>
<div class="a" style="left:1501px;top:161px;width:3px;height:7px;background:#8a8a8a"></div>
<div class="a" style="left:670px;top:914px;width:7px;height:3px;background:#8a8a8a"></div>
<div class="a" style="left:670px;top:910px;width:3px;height:7px;background:#8a8a8a"></div>
<div class="a" style="left:1497px;top:914px;width:7px;height:3px;background:#8a8a8a"></div>
<div class="a" style="left:1501px;top:910px;width:3px;height:7px;background:#8a8a8a"></div>
<div class="a" style="left:1082px;top:161px;width:12px;height:3px;background:#8a8a8a"></div>
<div class="a" style="left:1082px;top:914px;width:12px;height:3px;background:#8a8a8a"></div>
<div class="a" style="left:670px;top:533px;width:3px;height:12px;background:#8a8a8a"></div>
<div class="a" style="left:1501px;top:533px;width:3px;height:12px;background:#8a8a8a"></div>
<!-- visual header icons -->
<svg class="a" style="left:1426px;top:922px" width="16" height="16" viewBox="0 0 16 16"><path d="M1 1.5h14L9.5 8v6.5L6.5 12V8z" fill="none" stroke="#605e5c" stroke-width="1.1"/></svg>
<svg class="a" style="left:1455px;top:922px" width="16" height="16" viewBox="0 0 16 16"><path d="M1.5 4.5v10h10 M1.5 4.5h5 M11.5 14.5v-5 M7 9l7.5-7.5 M10 1.5h4.5V6" fill="none" stroke="#605e5c" stroke-width="1.1"/></svg>
<div class="t" style="left:1482px;top:918px;font-size:16px;font-weight:bold;color:#605e5c;letter-spacing:1px">&middot;&middot;&middot;</div>
<!--MAPEND-->








<!-- FILTERS -->
<div id="filters" class="a"></div>
<svg class="a" style="left:1537px;top:178px" width="10" height="14" viewBox="0 0 10 14"><path d="M8 1L2 7l6 6" fill="none" stroke="#252423" stroke-width="1.1"/></svg>
<svg class="a" style="left:1536px;top:225px" width="14" height="14" viewBox="0 0 14 14"><path d="M13 1v12L2 7z" fill="none" stroke="#605e5c" stroke-width="1.1"/></svg>
<div class="t" style="left:1533px;top:292px;font-size:14.5px;font-weight:bold;color:#252423;transform:rotate(90deg);transform-origin:0 0;left:1550px;top:250px">Filtros</div>
<!-- VIZ -->
<div id="viz" class="a"></div>
<div class="t" style="left:1571px;top:178px;font-size:15px;font-weight:bold;color:#252423">Visualizaciones</div>
<svg class="a" style="left:1719px;top:178px" width="8" height="14" viewBox="0 0 8 14"><path d="M1 1l6 6-6 6" fill="none" stroke="#252423" stroke-width="1.1"/></svg>
<svg class="a" style="left:1569px;top:216px" width="16" height="16" viewBox="0 0 16 16"><path d="M.5 .5v15h15" fill="none" stroke="#252423"/><rect x="2" y="2" width="8" height="3" fill="#5ea8e8" stroke="#2b88d8" stroke-width=".6"/><rect x="2" y="6.5" width="5" height="3" fill="none" stroke="#252423" stroke-width=".8"/><rect x="2" y="11" width="12" height="3" fill="#a19f9d"/></svg>
<svg class="a" style="left:1597px;top:216px" width="16" height="16" viewBox="0 0 16 16"><path d="M.5 .5v15h15" fill="none" stroke="#252423"/><rect x="3" y="5" width="3" height="10" fill="#5ea8e8" stroke="#2b88d8" stroke-width=".6"/><rect x="7" y="8" width="3" height="7" fill="none" stroke="#252423" stroke-width=".8"/><rect x="11" y="3" width="3" height="12" fill="#a19f9d"/></svg>
<svg class="a" style="left:1625px;top:216px" width="16" height="16" viewBox="0 0 16 16"><path d="M.5 .5v15h15" fill="none" stroke="#252423"/><rect x="1" y="1" width="14" height="3" fill="#5ea8e8" stroke="#2b88d8" stroke-width=".6"/><rect x="1" y="6" width="6" height="3" fill="#a19f9d"/><rect x="1" y="11" width="12" height="3" fill="none" stroke="#252423" stroke-width=".8"/></svg>
<svg class="a" style="left:1653px;top:216px" width="16" height="16" viewBox="0 0 16 16"><path d="M.5 .5v15h15" fill="none" stroke="#252423"/><rect x="2" y="1" width="3" height="14" fill="#5ea8e8" stroke="#2b88d8" stroke-width=".6"/><rect x="7" y="7" width="2.5" height="8" fill="#a19f9d"/><rect x="11" y="5" width="3" height="10" fill="none" stroke="#252423" stroke-width=".8"/></svg>
<svg class="a" style="left:1681px;top:216px" width="16" height="16" viewBox="0 0 16 16"><path d="M.5 .5v15h15" fill="none" stroke="#252423"/><rect x="1" y="2" width="13" height="4" fill="#5ea8e8" stroke="#2b88d8" stroke-width=".6"/><rect x="1" y="9" width="13" height="4" fill="none" stroke="#252423" stroke-width=".8"/></svg>
<svg class="a" style="left:1709px;top:216px" width="16" height="16" viewBox="0 0 16 16"><path d="M.5 .5v15h15" fill="none" stroke="#252423"/><rect x="3" y="1" width="4" height="14" fill="#5ea8e8" stroke="#2b88d8" stroke-width=".6"/><rect x="9" y="2" width="4" height="13" fill="none" stroke="#252423" stroke-width=".8"/></svg>
<svg class="a" style="left:1569px;top:240px" width="16" height="16" viewBox="0 0 16 16"><path d="M.5 .5v15h15" fill="none" stroke="#252423"/><path d="M1 13l5-7 3 3 6-6" fill="none" stroke="#2b88d8" stroke-width="1"/><path d="M1 8l4-4 4 3 6-3" fill="none" stroke="#252423" stroke-width=".8"/></svg>
<svg class="a" style="left:1597px;top:240px" width="16" height="16" viewBox="0 0 16 16"><path d="M.5 15.5h15" fill="none" stroke="#252423"/><path d="M1 15l6-10 4 6 4-9v13z" fill="#a19f9d"/><path d="M1 15l5-7 5 7z" fill="#5ea8e8" stroke="#2b88d8" stroke-width=".6"/></svg>
<svg class="a" style="left:1625px;top:240px" width="16" height="16" viewBox="0 0 16 16"><path d="M.5 15.5h15" fill="none" stroke="#252423"/><path d="M1 3l5 8 5-7 4 5v6H1z" fill="#5ea8e8" stroke="#2b88d8" stroke-width=".8"/></svg>
<svg class="a" style="left:1653px;top:240px" width="16" height="16" viewBox="0 0 16 16"><path d="M.5 .5v15h15" fill="none" stroke="#252423"/><rect x="3" y="2" width="3" height="13" fill="#5ea8e8"/><rect x="10" y="4" width="3" height="11" fill="#a19f9d"/><path d="M1 14l5-5 4 3 5-5" fill="none" stroke="#252423" stroke-width=".8"/></svg>
<svg class="a" style="left:1681px;top:240px" width="16" height="16" viewBox="0 0 16 16"><path d="M.5 .5v15h15" fill="none" stroke="#252423"/><rect x="3" y="8" width="3" height="7" fill="#5ea8e8"/><rect x="7" y="3" width="3" height="12" fill="none" stroke="#252423" stroke-width=".7"/><rect x="11" y="6" width="3" height="9" fill="#a19f9d"/><path d="M1 14l5-5 4 3 5-5" fill="none" stroke="#252423" stroke-width=".8"/></svg>
<svg class="a" style="left:1709px;top:240px" width="16" height="16" viewBox="0 0 16 16"><path d="M.5 .5v15h15" fill="none" stroke="#252423"/><path d="M1 4c4 4 9 4 14 0v6c-5 3-10 3-14 0z" fill="#a19f9d"/><path d="M1 8c4 4 9 4 14 0" fill="none" stroke="#2b88d8" stroke-width="2"/><rect x="1" y="11" width="14" height="2" fill="#e8801c"/></svg>
<svg class="a" style="left:1569px;top:264px" width="16" height="16" viewBox="0 0 16 16"><path d="M.5 .5v15h15" fill="none" stroke="#252423"/><rect x="2" y="6" width="3" height="9" fill="#a19f9d"/><rect x="6" y="8" width="3" height="7" fill="#a19f9d"/><rect x="9" y="2" width="3" height="8" fill="#5ea8e8" stroke="#2b88d8" stroke-width=".6"/><rect x="12" y="2" width="3" height="13" fill="none" stroke="#252423" stroke-width=".7"/></svg>
<svg class="a" style="left:1597px;top:264px" width="16" height="16" viewBox="0 0 16 16"><path d="M1 1h14l-2 4H3z M3 6h10l-2 4H5z M5 11h6v4H5z" fill="#5ea8e8" stroke="#2b88d8" stroke-width=".7"/></svg>
<svg class="a" style="left:1625px;top:264px" width="16" height="16" viewBox="0 0 16 16"><path d="M.5 .5v15h15" fill="none" stroke="#252423"/><circle cx="4" cy="5" r="1.3" fill="#5ea8e8"/><circle cx="8" cy="9" r="1.3" fill="#5ea8e8"/><circle cx="13" cy="3" r="1.5" fill="#252423"/><circle cx="4" cy="12" r="1.5" fill="#252423"/><circle cx="13" cy="11" r="1.5" fill="#5ea8e8"/></svg>
<svg class="a" style="left:1653px;top:264px" width="16" height="16" viewBox="0 0 16 16"><circle cx="8" cy="8" r="7" fill="#fff" stroke="#252423" stroke-width="1"/><path d="M8 1a7 7 0 0 1 5 12L8 8z" fill="#5ea8e8" stroke="#2b88d8" stroke-width=".7"/></svg>
<svg class="a" style="left:1681px;top:264px" width="16" height="16" viewBox="0 0 16 16"><circle cx="8" cy="8" r="6" fill="none" stroke="#5ea8e8" stroke-width="3"/><circle cx="8" cy="8" r="7.3" fill="none" stroke="#2b88d8" stroke-width=".6"/></svg>
<svg class="a" style="left:1709px;top:264px" width="16" height="16" viewBox="0 0 16 16"><rect x=".5" y=".5" width="15" height="15" fill="#fff" stroke="#252423" stroke-width=".8"/><rect x="1" y="1" width="7" height="14" fill="#5ea8e8"/><path d="M8 8h7 M11 8v7" stroke="#252423" stroke-width=".8"/></svg>
<svg class="a" style="left:1569px;top:288px" width="16" height="16" viewBox="0 0 16 16"><circle cx="8" cy="8" r="7" fill="#fff" stroke="#252423" stroke-width="1"/><path d="M4 5l3-1 1 3-2 2 1 3-2 1z M9 3l3 1 1 4-2 1-2-3z" fill="#1d9449"/></svg>
<svg class="a" style="left:1597px;top:288px" width="16" height="16" viewBox="0 0 16 16"><path d="M1 2l5 1 4-1 5 2v9l-4 2-4-1-4 1-2-2z" fill="#a19f9d" stroke="#252423" stroke-width=".8"/><path d="M1 2l5 1 2 5-3 4-4-1z" fill="#5ea8e8"/></svg>
<svg class="a" style="left:1625px;top:288px" width="16" height="16" viewBox="0 0 16 16"><path d="M1 2l5 1 4-1 5 2v9l-4 2-4-1-4 1-2-2z" fill="#fff" stroke="#252423" stroke-width=".8"/><path d="M6 3l2 5 4 1" fill="none" stroke="#2b88d8" stroke-width="1"/></svg>
<svg class="a" style="left:1653px;top:288px" width="16" height="16" viewBox="0 0 16 16"><path d="M8 0l7 16-7-4-7 4z" fill="#2b88d8"/></svg>
<svg class="a" style="left:1681px;top:288px" width="16" height="16" viewBox="0 0 16 16"><path d="M1 12a7 7 0 0 1 14 0" fill="none" stroke="#2b88d8" stroke-width="2.4"/><path d="M8 12l3-5" stroke="#252423" stroke-width="1.2"/></svg>
<svg class="a" style="left:1709px;top:288px" width="16" height="16" viewBox="0 0 16 16"><rect x=".5" y="2.5" width="15" height="11" fill="#fff" stroke="#252423" stroke-width=".8"/><text x="8" y="11" font-size="8" text-anchor="middle" fill="#2b88d8" font-family="Liberation Sans">123</text></svg>
<svg class="a" style="left:1569px;top:312px" width="16" height="16" viewBox="0 0 16 16"><rect x=".5" y=".5" width="15" height="15" fill="#fff" stroke="#252423" stroke-width=".8"/><path d="M3 4h9 M3 7h6 M3 10h8" stroke="#2b88d8" stroke-width="1.1"/></svg>
<svg class="a" style="left:1597px;top:312px" width="16" height="16" viewBox="0 0 16 16"><rect x=".5" y="2.5" width="15" height="11" fill="#fff" stroke="#252423" stroke-width=".8"/><path d="M3 9l2-3 2 3z" fill="#1d9449"/><path d="M9 6l2 3 2-3z" fill="#d13438"/></svg>
<svg class="a" style="left:1625px;top:312px" width="16" height="16" viewBox="0 0 16 16"><rect x=".5" y=".5" width="13" height="14" fill="#fff" stroke="#252423" stroke-width=".8"/><path d="M2 4h8 M2 7h4" stroke="#252423" stroke-width=".8"/><path d="M7 8h8l-3 4v4l-2-1v-3z" fill="#fff" stroke="#252423" stroke-width=".8"/></svg>
<svg class="a" style="left:1653px;top:312px" width="16" height="16" viewBox="0 0 16 16"><rect x=".5" y=".5" width="15" height="15" fill="#fff" stroke="#252423" stroke-width=".8"/><path d="M.5 5.5h15 M.5 10.5h15 M5.5 .5v15 M10.5 .5v15" stroke="#252423" stroke-width=".8"/></svg>
<svg class="a" style="left:1681px;top:312px" width="16" height="16" viewBox="0 0 16 16"><rect x=".5" y=".5" width="15" height="15" fill="#5ea8e8" stroke="#2b88d8" stroke-width=".8"/><path d="M.5 5.5h15 M.5 10.5h15 M5.5 .5v15 M10.5 .5v15" stroke="#252423" stroke-width=".8"/><rect x="1" y="1" width="14" height="4" fill="#fff"/></svg>
<svg class="a" style="left:1709px;top:312px" width="16" height="16" viewBox="0 0 16 16"><text x="8" y="14" font-size="14" font-weight="bold" text-anchor="middle" fill="#2b88d8" font-family="Liberation Sans">R</text></svg>
<svg class="a" style="left:1569px;top:336px" width="16" height="16" viewBox="0 0 16 16"><text x="8" y="13" font-size="13" font-weight="bold" text-anchor="middle" fill="#2b88d8" font-family="Liberation Sans">Py</text></svg>
<svg class="a" style="left:1597px;top:336px" width="16" height="16" viewBox="0 0 16 16"><path d="M.5 .5v15h15" fill="none" stroke="#252423"/><path d="M3 4h6 M3 8h9 M3 12h4" stroke="#252423" stroke-width="1"/><circle cx="12" cy="3" r="1.6" fill="none" stroke="#2b88d8"/></svg>
<svg class="a" style="left:1625px;top:336px" width="16" height="16" viewBox="0 0 16 16"><path d="M0 8h5 M5 3h4v10H5z M9 5h6v6H9z" fill="#5ea8e8" stroke="#2b88d8" stroke-width=".8"/></svg>
<svg class="a" style="left:1653px;top:336px" width="16" height="16" viewBox="0 0 16 16"><path d="M1 1.5h14v10H6l-3 3v-3H1z" fill="#fff" stroke="#2b88d8" stroke-width="1"/></svg>
<svg class="a" style="left:1681px;top:336px" width="16" height="16" viewBox="0 0 16 16"><path d="M2 .5h8l4 4v11H2z" fill="#fff" stroke="#252423" stroke-width=".8"/><path d="M4 8h6 M4 11h6" stroke="#2b88d8" stroke-width="1"/></svg>
<svg class="a" style="left:1709px;top:336px" width="16" height="16" viewBox="0 0 16 16"><rect x=".5" y=".5" width="15" height="15" fill="#fff" stroke="#252423" stroke-width=".8"/><path d="M2 14l5-6 3 3 5-6" stroke="#2b88d8" stroke-width="2"/><path d="M0 0h5v6l-2 2-3-2z" fill="#e8801c"/><circle cx="13" cy="13" r="2" fill="#e8801c"/></svg>
<svg class="a" style="left:1569px;top:360px" width="16" height="16" viewBox="0 0 16 16"><path d="M8 1l7 7-7 7-7-7z M5 4l7 7 M11 4l-7 7" fill="none" stroke="#252423" stroke-width="1.1"/></svg>
<svg class="a" style="left:1597px;top:360px" width="16" height="16" viewBox="0 0 16 16"><text x="8" y="11" font-size="14" text-anchor="middle" fill="#252423" font-family="Liberation Sans" letter-spacing="1">&#183;&#183;&#183;</text></svg>
<div class="a" style="left:1559px;top:388px;width:180px;height:0;border-top:1px dashed #d2d0ce"></div>
<div class="a" style="left:1566px;top:392px;width:22px;height:22px;background:#f2e6d8;border:1px solid #555"></div>
<svg class="a" style="left:1566px;top:392px" width="22" height="22" viewBox="0 0 22 22"><rect x=".75" y=".75" width="20.5" height="20.5" fill="#fff" stroke="#5c5a58" stroke-width="1.5"/><path d="M1.5 1.5h4v19h-4z" fill="#8ec4ee"/><circle cx="10" cy="6.5" r="3.5" fill="#e8801c" stroke="#333" stroke-width="1.4"/><path d="M13 9l7-4v10z" fill="#c8c6c4"/><path d="M7 12l1.5 2.5 2.8-.5-1.5 2.5 1.5 2.5-2.8-.3-1.5 2.5-1-2.7-2.8-.4 2.2-1.8-.6-2.8z" fill="#e8801c"/><circle cx="16" cy="16" r="1.6" fill="#e8801c"/></svg>
<svg class="a" style="left:1595px;top:393px" width="20" height="20" viewBox="0 0 20 20"><circle cx="10" cy="10" r="8.5" fill="none" stroke="#f2c811" stroke-width="2"/><path d="M8 6v8l6-4z" fill="#f2c811"/></svg>
<svg class="a" style="left:1622px;top:392px" width="22" height="22" viewBox="0 0 22 22"><rect width="22" height="22" fill="#8fb39a"/><path d="M0 18l10-8 12 4" stroke="#e8b0a0" stroke-width="2" fill="none"/><circle cx="6" cy="7" r="2.5" fill="#d13438"/><path d="M10 15l2 4-4-2h5l-4 2z" fill="#d13438"/><circle cx="18" cy="12" r="2" fill="#d13438"/></svg>
<svg class="a" style="left:1650px;top:392px" width="22" height="22" viewBox="0 0 22 22"><rect width="22" height="22" fill="#3b3a39"/><text x="11" y="10" font-size="8" text-anchor="middle" fill="#fff" font-family="Liberation Sans">A</text><text x="11" y="19" font-size="8" text-anchor="middle" fill="#fff" font-family="Liberation Sans">Z</text></svg>
<div class="a" style="left:1559px;top:421px;width:180px;height:1px;background:#e1dfdd"></div>
<svg class="a" style="left:1580px;top:426px" width="22" height="22" viewBox="0 0 22 22"><path d="M2.5 1h12" stroke="#252423" stroke-width="1"/><rect x="2.5" y="3.5" width="16" height="6" fill="none" stroke="#252423" stroke-width="1" stroke-dasharray="1.6 1.2"/><rect x="2.5" y="12.5" width="16" height="6" fill="none" stroke="#252423" stroke-width="1" stroke-dasharray="1.6 1.2"/></svg>
<div class="a" style="left:1571px;top:451px;width:40px;height:4px;background:#f2c811;border-radius:2px"></div>
<svg class="a" style="left:1620px;top:425px" width="20" height="22" viewBox="0 0 20 22"><path d="M3 2h13v6H3z M16 5h2v6H9v3 M8 14h3v7H8z" fill="none" stroke="#252423" stroke-width="1.1"/></svg>
<svg class="a" style="left:1659px;top:425px" width="22" height="22" viewBox="0 0 22 22"><circle cx="10" cy="10" r="8" fill="none" stroke="#252423" stroke-width="1.1"/><path d="M16 16l5 5 M4 13l3-4 3 3 4-5" fill="none" stroke="#252423" stroke-width="1.1"/></svg>
<div class="a" style="left:1732px;top:455px;width:6px;height:260px;background:#c8c6c4;border-radius:3px"></div>
<div class="t" style="left:1571px;top:463px;font-size:12px;color:#252423">Category (required)</div>
<div class="a" style="left:1564px;top:482px;width:168px;height:36px;border:1px dashed #c8c6c4;background:#fff;border-radius:3px"></div>
<div class="a" style="left:1567px;top:485px;width:162px;height:24px;background:#e9e8e7;border:1px solid #d2d0ce;border-radius:2px"></div>
<div class="t" style="left:1571px;top:491px;font-size:12px;color:#252423">name</div>
<svg class="a" style="left:1697px;top:493px" width="12" height="8" viewBox="0 0 12 8"><path d="M1 1l5 5 5-5" fill="none" stroke="#605e5c" stroke-width="1.1"/></svg>
<svg class="a" style="left:1716px;top:492px" width="10" height="10" viewBox="0 0 10 10"><path d="M1 1l8 8M9 1L1 9" stroke="#605e5c" stroke-width="1.1"/></svg>
<div class="t" style="left:1571px;top:532px;font-size:12px;color:#252423">Icon URL / WKT / SVG</div>
<div class="a" style="left:1564px;top:551px;width:168px;height:36px;border:1px dashed #c8c6c4;background:#fff;border-radius:3px"></div>
<div class="a" style="left:1567px;top:554px;width:162px;height:24px;background:#e9e8e7;border:1px solid #d2d0ce;border-radius:2px"></div>
<div class="t" style="left:1571px;top:560px;font-size:12px;color:#252423">coordinates</div>
<svg class="a" style="left:1697px;top:562px" width="12" height="8" viewBox="0 0 12 8"><path d="M1 1l5 5 5-5" fill="none" stroke="#605e5c" stroke-width="1.1"/></svg>
<svg class="a" style="left:1716px;top:561px" width="10" height="10" viewBox="0 0 10 10"><path d="M1 1l8 8M9 1L1 9" stroke="#605e5c" stroke-width="1.1"/></svg>
<div class="t" style="left:1571px;top:601px;font-size:12px;color:#252423">Longitude</div>
<div class="a" style="left:1564px;top:620px;width:168px;height:28px;border:1px dashed #c8c6c4;background:#fff"></div>
<div class="t" style="left:1573px;top:628px;font-size:12px;color:#252423">Agregar campos de datos a...</div>
<div class="t" style="left:1571px;top:661px;font-size:12px;color:#252423">Latitude</div>
<div class="a" style="left:1564px;top:680px;width:168px;height:28px;border:1px dashed #c8c6c4;background:#fff"></div>
<div class="t" style="left:1573px;top:688px;font-size:12px;color:#252423">Agregar campos de datos a...</div>
<div class="t" style="left:1571px;top:721px;font-size:12px;color:#252423">Longitude - Solid Line</div>
<div class="a" style="left:1564px;top:740px;width:168px;height:28px;border:1px dashed #c8c6c4;background:#fff"></div>
<div class="t" style="left:1573px;top:748px;font-size:12px;color:#252423">Agregar campos de datos a...</div>
<div class="t" style="left:1571px;top:781px;font-size:12px;color:#252423">Latitude - Solid Line</div>
<div class="a" style="left:1564px;top:800px;width:168px;height:28px;border:1px dashed #c8c6c4;background:#fff"></div>
<div class="t" style="left:1573px;top:808px;font-size:12px;color:#252423">Agregar campos de datos a...</div>
<div class="t" style="left:1571px;top:841px;font-size:12px;color:#252423">Longitude - Dotted Line</div>
<div class="a" style="left:1564px;top:860px;width:168px;height:28px;border:1px dashed #c8c6c4;background:#fff"></div>
<div class="t" style="left:1573px;top:868px;font-size:12px;color:#252423">Agregar campos de datos a...</div>
<div class="t" style="left:1571px;top:901px;font-size:12px;color:#252423">Latitude - Dotted Line</div>
<div class="a" style="left:1564px;top:920px;width:168px;height:28px;border:1px dashed #c8c6c4;background:#fff"></div>
<div class="t" style="left:1573px;top:928px;font-size:12px;color:#252423">Agregar campos de datos a...</div>
<div class="t" style="left:1571px;top:961px;font-size:12px;color:#252423">Size (required)</div>
<div class="a" style="left:1564px;top:980px;width:168px;height:36px;border:1px dashed #c8c6c4;border-bottom:none;background:#fff;border-radius:3px 3px 0 0"></div>
<div class="a" style="left:1567px;top:983px;width:162px;height:24px;background:#e9e8e7;border:1px solid #d2d0ce;border-radius:2px"></div>
<div class="t" style="left:1571px;top:990px;font-size:12px;color:#252423">Size</div>
<svg class="a" style="left:1697px;top:992px" width="12" height="8" viewBox="0 0 12 8"><path d="M1 1l5 5 5-5" fill="none" stroke="#605e5c" stroke-width="1.1"/></svg>
<svg class="a" style="left:1716px;top:991px" width="10" height="10" viewBox="0 0 10 10"><path d="M1 1l8 8M9 1L1 9" stroke="#605e5c" stroke-width="1.1"/></svg>
<!-- FIELDS -->
<div id="fields" class="a"></div>
<div class="t" style="left:1752px;top:178px;font-size:15.5px;font-weight:bold;color:#252423">Campos</div>
<svg class="a" style="left:1899px;top:178px" width="8" height="14" viewBox="0 0 8 14"><path d="M1 1l6 6-6 6" fill="none" stroke="#252423" stroke-width="1.1"/></svg>
<div class="a" style="left:1744px;top:214px;width:172px;height:30px;background:#fff;border:1px solid #c8c6c4;border-radius:2px"></div>
<svg class="a" style="left:1755px;top:220px" width="16" height="16" viewBox="0 0 16 16"><circle cx="9.5" cy="6.5" r="4.8" fill="none" stroke="#252423" stroke-width="1.1"/><path d="M6 10l-5 5" stroke="#252423" stroke-width="1.1"/></svg>
<div class="t" style="left:1780px;top:222px;font-size:13px;color:#252423">Buscar</div>
<div class="a" style="left:1740px;top:248px;width:180px;height:1px;background:#e1dfdd"></div>
<div class="a" style="left:1914px;top:258px;width:6px;height:545px;background:#c8c6c4;border-radius:3px"></div>
<svg class="a" style="left:1744px;top:267px" width="12" height="7" viewBox="0 0 12 7"><path d="M1 6l5-5 5 5" fill="none" stroke="#605e5c" stroke-width="1"/></svg>
<svg class="a" style="left:1763px;top:266px" width="14" height="12" viewBox="0 0 14 12"><rect x=".5" y=".5" width="13" height="11" fill="#fff" stroke="#252423"/><rect x=".5" y=".5" width="13" height="3" fill="#252423"/><path d="M.5 6h13 M.5 8.7h13 M4.8 3v9 M9.2 3v9" stroke="#252423" stroke-width=".9"/></svg>
<div class="t" style="left:1788px;top:265px;font-size:12px;color:#252423;font-weight:normal;letter-spacing:-0.2px">Francesc Macià</div>
<div class="a" style="left:1772px;top:295px;width:12px;height:12px;border:1px solid #605e5c;border-radius:2px;background:#fff"></div>
<div class="t" style="left:1809px;top:295px;font-size:12px;color:#252423;font-weight:normal;letter-spacing:-0.2px">Coordenadas</div>
<div class="a" style="left:1772px;top:319px;width:12px;height:12px;border:1px solid #605e5c;border-radius:2px;background:#fff"></div>
<div class="t" style="left:1789px;top:319px;font-size:12px;color:#252423;font-weight:normal;letter-spacing:-0.2px">&Sigma;</div>
<div class="t" style="left:1809px;top:319px;font-size:12px;color:#252423;font-weight:normal;letter-spacing:-0.2px">heading</div>
<div class="a" style="left:1772px;top:343px;width:12px;height:12px;border:1px solid #605e5c;border-radius:2px;background:#fff"></div>
<svg class="a" style="left:1789px;top:343px" width="9" height="12" viewBox="0 0 9 12"><rect width="9" height="12" fill="#252423"/><g fill="#fff"><rect x="2" y="2" width="5" height="2"/><rect x="2" y="6" width="1.5" height="1.5"/><rect x="5.5" y="6" width="1.5" height="1.5"/><rect x="2" y="9" width="1.5" height="1.5"/><rect x="5.5" y="9" width="1.5" height="1.5"/></g></svg>
<div class="t" style="left:1809px;top:343px;font-size:12px;color:#252423;font-weight:normal;letter-spacing:-0.2px">Image</div>
<div class="a" style="left:1772px;top:367px;width:12px;height:12px;border:1px solid #605e5c;border-radius:2px;background:#fff"></div>
<div class="t" style="left:1789px;top:367px;font-size:12px;color:#252423;font-weight:normal;letter-spacing:-0.2px">&Sigma;</div>
<div class="t" style="left:1809px;top:367px;font-size:12px;color:#252423;font-weight:normal;letter-spacing:-0.2px">latitude</div>
<div class="a" style="left:1772px;top:391px;width:12px;height:12px;border:1px solid #605e5c;border-radius:2px;background:#fff"></div>
<div class="t" style="left:1789px;top:391px;font-size:12px;color:#252423;font-weight:normal;letter-spacing:-0.2px">&Sigma;</div>
<div class="t" style="left:1809px;top:391px;font-size:12px;color:#252423;font-weight:normal;letter-spacing:-0.2px">longitude</div>
<div class="a" style="left:1772px;top:415px;width:12px;height:12px;border:1px solid #605e5c;border-radius:2px;background:#fff"></div>
<div class="t" style="left:1809px;top:415px;font-size:12px;color:#252423;font-weight:normal;letter-spacing:-0.2px">Lugar</div>
<div class="a" style="left:1772px;top:439px;width:12px;height:12px;border:1px solid #605e5c;border-radius:2px;background:#fff"></div>
<div class="t" style="left:1809px;top:439px;font-size:12px;color:#252423;font-weight:normal;letter-spacing:-0.2px">name</div>
<div class="a" style="left:1772px;top:463px;width:12px;height:12px;border:1px solid #605e5c;border-radius:2px;background:#fff"></div>
<div class="t" style="left:1789px;top:463px;font-size:12px;color:#252423;font-weight:normal;letter-spacing:-0.2px">&Sigma;</div>
<div class="t" style="left:1809px;top:463px;font-size:12px;color:#252423;font-weight:normal;letter-spacing:-0.2px">range</div>
<div class="a" style="left:1772px;top:487px;width:12px;height:12px;border:1px solid #605e5c;border-radius:2px;background:#fff"></div>
<div class="t" style="left:1789px;top:487px;font-size:12px;color:#252423;font-weight:normal;letter-spacing:-0.2px">&Sigma;</div>
<div class="t" style="left:1809px;top:487px;font-size:12px;color:#252423;font-weight:normal;letter-spacing:-0.2px">Tamaño</div>
<svg class="a" style="left:1744px;top:518px" width="12" height="7" viewBox="0 0 12 7"><path d="M1 1l5 5 5-5" fill="none" stroke="#605e5c" stroke-width="1"/></svg>
<svg class="a" style="left:1763px;top:516px" width="14" height="12" viewBox="0 0 14 12"><rect x=".5" y=".5" width="13" height="11" fill="#fff" stroke="#252423"/><rect x=".5" y=".5" width="13" height="3" fill="#252423"/><path d="M.5 6h13 M.5 8.7h13 M4.8 3v9 M9.2 3v9" stroke="#252423" stroke-width=".9"/></svg><div class="a" style="left:1769px;top:523px;width:11px;height:11px;border-radius:50%;background:#f2c811"></div><svg class="a" style="left:1771px;top:525px" width="7" height="7" viewBox="0 0 7 7"><path d="M1 3.5l1.5 1.5 3-3" fill="none" stroke="#252423" stroke-width="1"/></svg>
<div class="t" style="left:1788px;top:515px;font-size:12px;color:#252423;font-weight:bold;letter-spacing:-0.2px">Líneas Bus</div>
<svg class="a" style="left:1744px;top:545px" width="12" height="7" viewBox="0 0 12 7"><path d="M1 1l5 5 5-5" fill="none" stroke="#605e5c" stroke-width="1"/></svg>
<svg class="a" style="left:1763px;top:543px" width="14" height="12" viewBox="0 0 14 12"><rect x=".5" y=".5" width="13" height="11" fill="#fff" stroke="#252423"/><rect x=".5" y=".5" width="13" height="3" fill="#252423"/><path d="M.5 6h13 M.5 8.7h13 M4.8 3v9 M9.2 3v9" stroke="#252423" stroke-width=".9"/></svg>
<div class="t" style="left:1788px;top:542px;font-size:12px;color:#252423;font-weight:normal;letter-spacing:-0.2px">Líneas Bus (2)</div>
<svg class="a" style="left:1744px;top:572px" width="12" height="7" viewBox="0 0 12 7"><path d="M1 1l5 5 5-5" fill="none" stroke="#605e5c" stroke-width="1"/></svg>
<svg class="a" style="left:1763px;top:570px" width="14" height="12" viewBox="0 0 14 12"><rect x=".5" y=".5" width="13" height="11" fill="#fff" stroke="#252423"/><rect x=".5" y=".5" width="13" height="3" fill="#252423"/><path d="M.5 6h13 M.5 8.7h13 M4.8 3v9 M9.2 3v9" stroke="#252423" stroke-width=".9"/></svg>
<div class="t" style="left:1788px;top:569px;font-size:12px;color:#252423;font-weight:normal;letter-spacing:-0.2px">Líneas Bus Orige...</div>
<svg class="a" style="left:1744px;top:599px" width="12" height="7" viewBox="0 0 12 7"><path d="M1 1l5 5 5-5" fill="none" stroke="#605e5c" stroke-width="1"/></svg>
<svg class="a" style="left:1763px;top:597px" width="14" height="12" viewBox="0 0 14 12"><rect x=".5" y=".5" width="13" height="11" fill="#fff" stroke="#252423"/><rect x=".5" y=".5" width="13" height="3" fill="#252423"/><path d="M.5 6h13 M.5 8.7h13 M4.8 3v9 M9.2 3v9" stroke="#252423" stroke-width=".9"/></svg>
<div class="t" style="left:1788px;top:596px;font-size:12px;color:#252423;font-weight:normal;letter-spacing:-0.2px">Paradas de Bus</div>
<svg class="a" style="left:1744px;top:626px" width="12" height="7" viewBox="0 0 12 7"><path d="M1 1l5 5 5-5" fill="none" stroke="#605e5c" stroke-width="1"/></svg>
<svg class="a" style="left:1763px;top:624px" width="14" height="12" viewBox="0 0 14 12"><rect x=".5" y=".5" width="13" height="11" fill="#fff" stroke="#252423"/><rect x=".5" y=".5" width="13" height="3" fill="#252423"/><path d="M.5 6h13 M.5 8.7h13 M4.8 3v9 M9.2 3v9" stroke="#252423" stroke-width=".9"/></svg>
<div class="t" style="left:1788px;top:623px;font-size:12px;color:#252423;font-weight:normal;letter-spacing:-0.2px">Paradas de Bus Es...</div>
<svg class="a" style="left:1744px;top:653px" width="12" height="7" viewBox="0 0 12 7"><path d="M1 1l5 5 5-5" fill="none" stroke="#605e5c" stroke-width="1"/></svg>
<svg class="a" style="left:1763px;top:651px" width="14" height="12" viewBox="0 0 14 12"><rect x=".5" y=".5" width="13" height="11" fill="#fff" stroke="#252423"/><rect x=".5" y=".5" width="13" height="3" fill="#252423"/><path d="M.5 6h13 M.5 8.7h13 M4.8 3v9 M9.2 3v9" stroke="#252423" stroke-width=".9"/></svg>
<div class="t" style="left:1788px;top:650px;font-size:12px;color:#252423;font-weight:normal;letter-spacing:-0.2px">parades_linia</div>
<svg class="a" style="left:1744px;top:680px" width="12" height="7" viewBox="0 0 12 7"><path d="M1 1l5 5 5-5" fill="none" stroke="#605e5c" stroke-width="1"/></svg>
<svg class="a" style="left:1763px;top:678px" width="14" height="12" viewBox="0 0 14 12"><rect x=".5" y=".5" width="13" height="11" fill="#fff" stroke="#252423"/><rect x=".5" y=".5" width="13" height="3" fill="#252423"/><path d="M.5 6h13 M.5 8.7h13 M4.8 3v9 M9.2 3v9" stroke="#252423" stroke-width=".9"/></svg>
<div class="t" style="left:1788px;top:677px;font-size:12px;color:#252423;font-weight:normal;letter-spacing:-0.2px">parades_linia D20</div>
<svg class="a" style="left:1744px;top:707px" width="12" height="7" viewBox="0 0 12 7"><path d="M1 1l5 5 5-5" fill="none" stroke="#605e5c" stroke-width="1"/></svg>
<svg class="a" style="left:1763px;top:705px" width="14" height="12" viewBox="0 0 14 12"><rect x=".5" y=".5" width="13" height="11" fill="#fff" stroke="#252423"/><rect x=".5" y=".5" width="13" height="3" fill="#252423"/><path d="M.5 6h13 M.5 8.7h13 M4.8 3v9 M9.2 3v9" stroke="#252423" stroke-width=".9"/></svg>
<div class="t" style="left:1788px;top:704px;font-size:12px;color:#252423;font-weight:normal;letter-spacing:-0.2px">Polígono Barri Sa...</div>
<svg class="a" style="left:1744px;top:734px" width="12" height="7" viewBox="0 0 12 7"><path d="M1 1l5 5 5-5" fill="none" stroke="#605e5c" stroke-width="1"/></svg>
<svg class="a" style="left:1763px;top:732px" width="14" height="12" viewBox="0 0 14 12"><rect x=".5" y=".5" width="13" height="11" fill="#fff" stroke="#252423"/><rect x=".5" y=".5" width="13" height="3" fill="#252423"/><path d="M.5 6h13 M.5 8.7h13 M4.8 3v9 M9.2 3v9" stroke="#252423" stroke-width=".9"/></svg>
<div class="t" style="left:1788px;top:731px;font-size:12px;color:#252423;font-weight:normal;letter-spacing:-0.2px">Polígono Área Ba...</div>
<svg class="a" style="left:1744px;top:762px" width="12" height="7" viewBox="0 0 12 7"><path d="M1 6l5-5 5 5" fill="none" stroke="#605e5c" stroke-width="1"/></svg>
<svg class="a" style="left:1763px;top:758px" width="14" height="12" viewBox="0 0 14 12"><rect x=".5" y=".5" width="13" height="11" fill="#fff" stroke="#252423"/><rect x=".5" y=".5" width="13" height="3" fill="#252423"/><path d="M.5 6h13 M.5 8.7h13 M4.8 3v9 M9.2 3v9" stroke="#252423" stroke-width=".9"/></svg><div class="a" style="left:1769px;top:765px;width:11px;height:11px;border-radius:50%;background:#f2c811"></div><svg class="a" style="left:1771px;top:767px" width="7" height="7" viewBox="0 0 7 7"><path d="M1 3.5l1.5 1.5 3-3" fill="none" stroke="#252423" stroke-width="1"/></svg>
<div class="t" style="left:1788px;top:758px;font-size:12px;color:#252423;font-weight:bold;letter-spacing:-0.2px">Polígonos</div>
<div class="a" style="left:1772px;top:788px;width:12px;height:12px;background:#f2c811;border-radius:2px"></div><svg class="a" style="left:1774px;top:790px" width="8" height="8" viewBox="0 0 8 8"><path d="M1 4l2 2 4-4" fill="none" stroke="#252423" stroke-width="1.2"/></svg>
<div class="t" style="left:1809px;top:789px;font-size:12px;color:#252423;font-weight:normal;letter-spacing:-0.2px">coordinates</div>
<div class="a" style="left:1772px;top:812px;width:12px;height:12px;background:#f2c811;border-radius:2px"></div><svg class="a" style="left:1774px;top:814px" width="8" height="8" viewBox="0 0 8 8"><path d="M1 4l2 2 4-4" fill="none" stroke="#252423" stroke-width="1.2"/></svg>
<div class="t" style="left:1809px;top:813px;font-size:12px;color:#252423;font-weight:normal;letter-spacing:-0.2px">name</div>
<svg class="a" style="left:1744px;top:843px" width="12" height="7" viewBox="0 0 12 7"><path d="M1 6l5-5 5 5" fill="none" stroke="#605e5c" stroke-width="1"/></svg>
<svg class="a" style="left:1763px;top:840px" width="14" height="12" viewBox="0 0 14 12"><rect x=".5" y=".5" width="13" height="11" fill="#fff" stroke="#252423"/><rect x=".5" y=".5" width="13" height="3" fill="#252423"/><path d="M.5 6h13 M.5 8.7h13 M4.8 3v9 M9.2 3v9" stroke="#252423" stroke-width=".9"/></svg>
<div class="t" style="left:1788px;top:840px;font-size:12px;color:#252423;font-weight:normal;letter-spacing:-0.2px">Sagrada Familia c...</div>
<div class="a" style="left:1772px;top:870px;width:12px;height:12px;border:1px solid #605e5c;border-radius:2px;background:#fff"></div>
<div class="t" style="left:1789px;top:870px;font-size:12px;color:#252423;font-weight:normal;letter-spacing:-0.2px">&Sigma;</div>
<div class="t" style="left:1809px;top:870px;font-size:12px;color:#252423;font-weight:normal;letter-spacing:-0.2px">heading</div>
<div class="a" style="left:1772px;top:894px;width:12px;height:12px;border:1px solid #605e5c;border-radius:2px;background:#fff"></div>
<div class="t" style="left:1809px;top:894px;font-size:12px;color:#252423;font-weight:normal;letter-spacing:-0.2px">Id</div>
<div class="a" style="left:1772px;top:918px;width:12px;height:12px;border:1px solid #605e5c;border-radius:2px;background:#fff"></div>
<div class="t" style="left:1809px;top:918px;font-size:12px;color:#252423;font-weight:normal;letter-spacing:-0.2px">IMG URL / ...</div>
<div class="a" style="left:1772px;top:942px;width:12px;height:12px;border:1px solid #605e5c;border-radius:2px;background:#fff"></div>
<div class="t" style="left:1789px;top:942px;font-size:12px;color:#252423;font-weight:normal;letter-spacing:-0.2px">&Sigma;</div>
<div class="t" style="left:1809px;top:942px;font-size:12px;color:#252423;font-weight:normal;letter-spacing:-0.2px">latitud</div>
<div class="a" style="left:1772px;top:966px;width:12px;height:12px;border:1px solid #605e5c;border-radius:2px;background:#fff"></div>
<div class="t" style="left:1789px;top:966px;font-size:12px;color:#252423;font-weight:normal;letter-spacing:-0.2px">&Sigma;</div>
<div class="t" style="left:1809px;top:966px;font-size:12px;color:#252423;font-weight:normal;letter-spacing:-0.2px">longitud</div>
<div class="a" style="left:1772px;top:990px;width:12px;height:12px;border:1px solid #605e5c;border-radius:2px;background:#fff"></div>
<div class="t" style="left:1809px;top:990px;font-size:12px;color:#252423;font-weight:normal;letter-spacing:-0.2px">Lugar</div>
<div class="a" style="left:1772px;top:1014px;width:12px;height:12px;border:1px solid #605e5c;border-radius:2px;background:#fff"></div>
<!-- TABS -->






<div id="tabs" class="a"></div>
<div class="a" style="left:41px;top:981px;width:40px;height:35px;background:#f3f2f1"></div>
<svg class="a" style="left:45px;top:993px" width="6" height="10" viewBox="0 0 6 10"><path d="M5 0v10L0 5z" fill="#000"/></svg>
<svg class="a" style="left:68px;top:993px" width="6" height="10" viewBox="0 0 6 10"><path d="M0 0v10l5-5z" fill="#c8c6c4"/></svg>
<div class="a" style="left:80px;top:981px;width:1px;height:35px;background:#8a8886"></div>
<div class="t" style="left:81px;top:992px;font-size:12.5px;color:#605e5c;width:119px;overflow:hidden;text-align:right;padding-right:18px;box-sizing:border-box">ge and coordinates</div>
<div class="pt" style="left:200px;width:180px">Imágenes en movimiento</div>
<div class="pt" style="left:380px;width:96px">POLYGON</div>
<div class="pt" style="left:476px;width:105px">POLYGON 2</div>
<div class="pt" style="left:581px;width:105px">POLYGON 3</div>
<div class="pt" style="left:686px;width:106px">POLYGON 4</div>
<div class="pt" style="left:792px;width:106px;background:#fff;color:#252423;border-bottom:3px solid #f2c811;line-height:35px">POLYGON 5</div>
<div class="pt" style="left:898px;width:254px">Duplicado de Imágenes en movimiento</div>
<div class="pt" style="left:1152px;width:281px">Duplicado de Duplicado de Imágenes en ...</div>
<div class="pt" style="left:1433px;width:86px;border-right:1px solid #d2d0ce">Página 1</div>
<div class="a" style="left:1518px;top:983px;width:40px;height:32px;background:#f2c811"></div>
<svg class="a" style="left:1533px;top:994px" width="12" height="12" viewBox="0 0 12 12"><path d="M6 0.5v11M0.5 6h11" stroke="#6e6d6b" stroke-width="2.4"/></svg>

<div id="status" class="a"><div class="t" style="left:5px;top:6px;font-size:12px;color:#252423">Página 16 de 16</div></div>

</body></html>
